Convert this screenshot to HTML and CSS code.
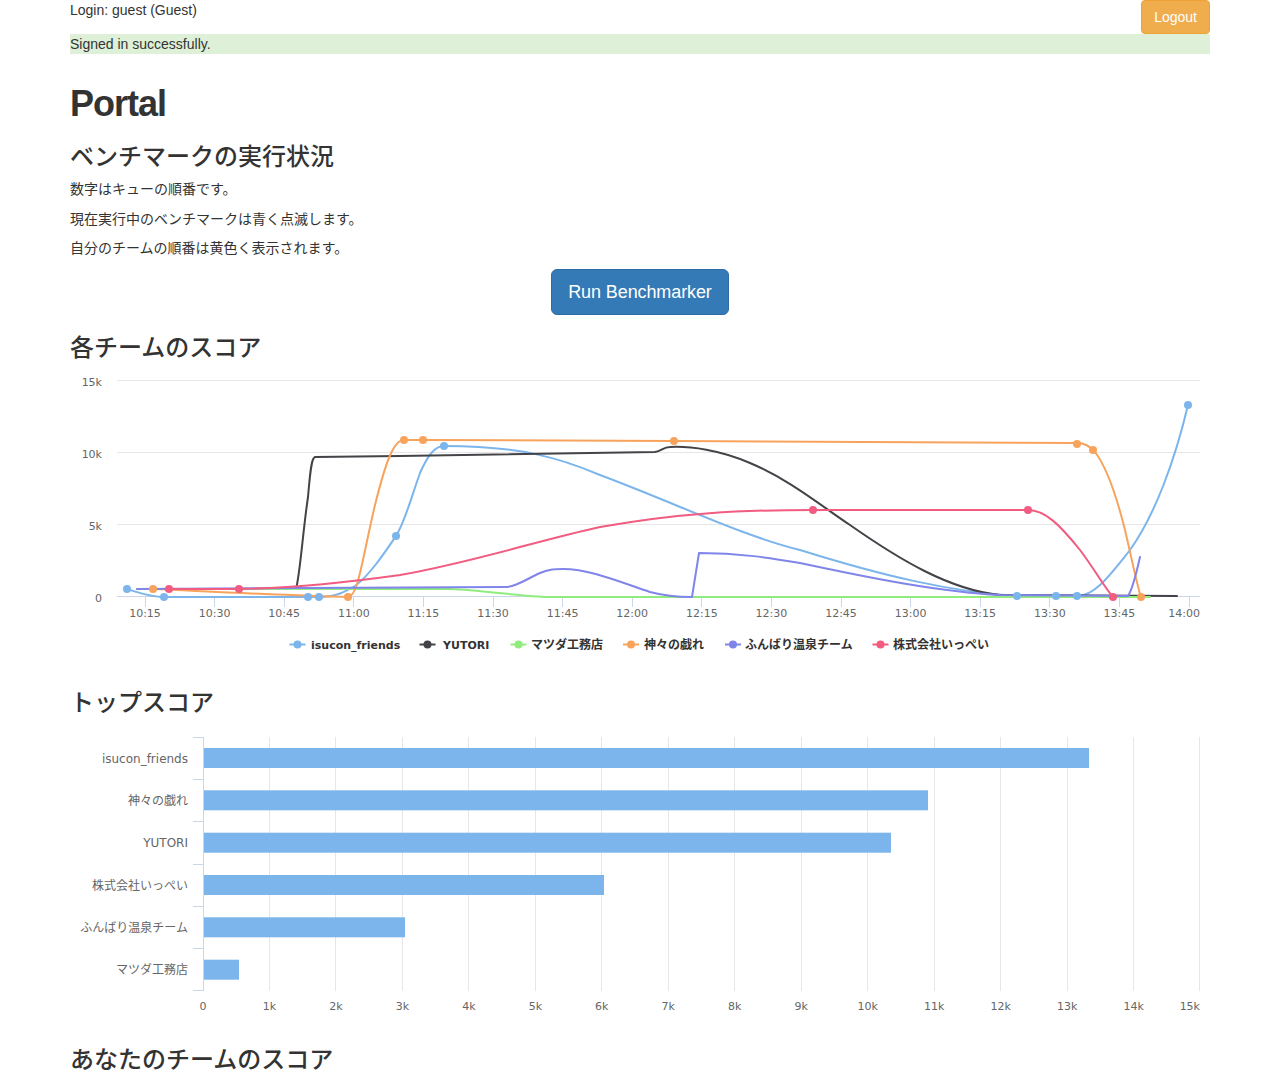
FILE: index.html
```html
<!DOCTYPE html>
<html lang="ja">
<head>
<meta charset="utf-8">
<title>Portal</title>
<link rel="stylesheet" href="styles.css">
</head>
<body>
<div class="container">
  <div class="topbar">
    <span class="login">Login: guest (Guest)</span>
    <button class="btn btn-warning">Logout</button>
  </div>
  <div class="flash">Signed in successfully.</div>

  <h1 class="page-title">Portal</h1>

  <h3 class="section section-first">ベンチマークの実行状況</h3>
  <p class="note">数字はキューの順番です。</p>
  <p class="note">現在実行中のベンチマークは青く点滅します。</p>
  <p class="note">自分のチームの順番は黄色く表示されます。</p>
  <div class="run-wrap"><button class="btn btn-primary btn-lg">Run Benchmarker</button></div>

  <h3 class="section">各チームのスコア</h3>
  <svg class="chart" width="1140" height="299" viewBox="70 371 1140 299">
    <path class="grid" d="M117 380.5H1200M117 452.5H1200M117 524.5H1200"/>
    <path class="axis" d="M117 596.5H1200"/>
    <path class="axis" d="M145.5 597V607M214.5 597V607M284.5 597V607M353.5 597V607M423.5 597V607M493.5 597V607M562.5 597V607M632.5 597V607M701.5 597V607M771.5 597V607M841.5 597V607M910.5 597V607M980.5 597V607M1049.5 597V607M1119.5 597V607M1189.5 597V607"/>

    <g class="axis-label" text-anchor="end">
      <text x="102" y="385.5">15k</text>
      <text x="102" y="457.5">10k</text>
      <text x="102" y="529.5">5k</text>
      <text x="102" y="601.5">0</text>
    </g>
    <g class="axis-label" text-anchor="middle">
      <text x="145" y="616.5">10:15</text>
      <text x="214.6" y="616.5">10:30</text>
      <text x="284.2" y="616.5">10:45</text>
      <text x="353.8" y="616.5">11:00</text>
      <text x="423.4" y="616.5">11:15</text>
      <text x="493" y="616.5">11:30</text>
      <text x="562.6" y="616.5">11:45</text>
      <text x="632.2" y="616.5">12:00</text>
      <text x="701.8" y="616.5">12:15</text>
      <text x="771.4" y="616.5">12:30</text>
      <text x="841" y="616.5">12:45</text>
      <text x="910.6" y="616.5">13:00</text>
      <text x="980.2" y="616.5">13:15</text>
      <text x="1049.8" y="616.5">13:30</text>
      <text x="1119.4" y="616.5">13:45</text>
      <text x="1200" y="616.5" text-anchor="end">14:00</text>
    </g>

    <g class="series">
      <path stroke="#7cb5ec" d="M127,589 C140,593 150,597 164,597 L319,597 C335,597 345,592 355,586 C370,575 385,552 396,536 C405,522 412,495 420,473 C428,455 435,446 444,446 C520,446 560,458 600,475 C680,505 740,535 800,550 C880,575 950,592 1017,596 L1077,596 C1095,596 1110,575 1130,550 C1155,515 1175,460 1188,405"/>
      <path stroke="#434348" d="M137,589 L296,589 C300,575 303,530 308,497 C310,475 311,458 315,457 L400,456 L655,452 C662,451 663,447 670,447 C690,446 720,450 750,463 C790,480 820,505 850,525 C900,560 950,590 1000,595 L1177,596"/>
      <path stroke="#90ed7d" d="M137,589 L450,589 C480,590 510,595 545,597 L1150,597"/>
      <path stroke="#f7a35c" d="M153,589 C220,592 300,596 348,597 C358,597 362,560 375,505 C385,465 393,440 404,440 L423,440 L674,441 L1077,443 C1085,443 1090,446 1095,452 C1105,465 1115,490 1125,530 C1132,560 1137,585 1141,597"/>
      <path stroke="#8085e9" d="M137,589 L505,587 C515,587 525,580 540,573 C550,569 555,569 563,569 C590,569 620,582 650,592 C665,596 675,597 692,597 L699,553 C740,553 770,558 800,563 C870,578 940,592 1000,595 L1128,596 C1132,590 1136,575 1140,557"/>
      <path stroke="#f15c80" d="M169,589 L239,589 C300,588 350,582 400,575 C470,563 540,540 600,527 C680,513 740,510 813,510 L1028,510 C1045,510 1060,525 1080,550 C1095,570 1105,588 1113,597"/>
    </g>

    <g fill="#7cb5ec">
      <circle cx="127" cy="589" r="4"/><circle cx="164" cy="597" r="4"/><circle cx="308" cy="597" r="4"/><circle cx="319" cy="597" r="4"/><circle cx="396" cy="536" r="4"/><circle cx="444" cy="446" r="4"/><circle cx="1017" cy="596" r="4"/><circle cx="1056" cy="596" r="4"/><circle cx="1077" cy="596" r="4"/><circle cx="1188" cy="405" r="4"/>
    </g>
    <g fill="#f7a35c">
      <circle cx="153" cy="589" r="4"/><circle cx="348" cy="597" r="4"/><circle cx="404" cy="440" r="4"/><circle cx="423" cy="440" r="4"/><circle cx="674" cy="441" r="4"/><circle cx="1077" cy="444" r="4"/><circle cx="1093" cy="450" r="4"/><circle cx="1141" cy="597" r="4"/>
    </g>
    <g fill="#f15c80">
      <circle cx="169" cy="589" r="4"/><circle cx="239" cy="589" r="4"/><circle cx="813" cy="510" r="4"/><circle cx="1028" cy="510" r="4"/><circle cx="1113" cy="597" r="4"/>
    </g>

    <g class="legend">
      <path stroke="#7cb5ec" d="M289.5 644.5H305.5"/><circle cx="297.5" cy="644.5" r="4" fill="#7cb5ec"/>
      <text class="lg-latin" x="311" y="648.5">isucon_friends</text>
      <path stroke="#434348" d="M419.5 644.5H435.5"/><circle cx="427.5" cy="644.5" r="4" fill="#434348"/>
      <text class="lg-latin" x="443" y="648.5">YUTORI</text>
      <path stroke="#90ed7d" d="M510.5 644.5H526.5"/><circle cx="518.5" cy="644.5" r="4" fill="#90ed7d"/>
      <text class="lg-cjk" x="531" y="649">マツダ工務店</text>
      <path stroke="#f7a35c" d="M623 644.5H639"/><circle cx="631" cy="644.5" r="4" fill="#f7a35c"/>
      <text class="lg-cjk" x="644" y="649">神々の戯れ</text>
      <path stroke="#8085e9" d="M725 644.5H741"/><circle cx="733" cy="644.5" r="4" fill="#8085e9"/>
      <text class="lg-cjk" x="745" y="649">ふんばり温泉チーム</text>
      <path stroke="#f15c80" d="M872.5 644.5H888.5"/><circle cx="880.5" cy="644.5" r="4" fill="#f15c80"/>
      <text class="lg-cjk" x="893" y="649">株式会社いっぺい</text>
    </g>
  </svg>

  <h3 class="section">トップスコア</h3>
  <svg class="chart" width="1140" height="300" viewBox="70 727 1140 300">
    <path class="grid" d="M269.5 737V991M335.5 737V991M402.5 737V991M468.5 737V991M535.5 737V991M601.5 737V991M668.5 737V991M734.5 737V991M801.5 737V991M867.5 737V991M934.5 737V991M1000.5 737V991M1067.5 737V991M1133.5 737V991M1199.5 737V991"/>
    <path class="axis" d="M203.5 737V991"/>
    <path class="axis" d="M193 737.5H203M193 779.5H203M193 821.5H203M193 864.5H203M193 906.5H203M193 948.5H203M193 990.5H203"/>

    <g fill="#7cb5ec">
      <rect x="204" y="748" width="885" height="20"/>
      <rect x="204" y="790.3" width="724" height="20"/>
      <rect x="204" y="832.7" width="687" height="20"/>
      <rect x="204" y="875" width="400" height="20"/>
      <rect x="204" y="917.3" width="201" height="20"/>
      <rect x="204" y="959.7" width="35" height="20"/>
    </g>

    <g class="cat-label" text-anchor="end">
      <text x="188" y="762.7">isucon_friends</text>
      <text x="188" y="805">神々の戯れ</text>
      <text x="188" y="847.3">YUTORI</text>
      <text x="188" y="889.7">株式会社いっぺい</text>
      <text x="188" y="932">ふんばり温泉チーム</text>
      <text x="188" y="974.3">マツダ工務店</text>
    </g>

    <g class="axis-label" text-anchor="middle">
      <text x="203" y="1010">0</text>
      <text x="269.5" y="1010">1k</text>
      <text x="335.9" y="1010">2k</text>
      <text x="402.4" y="1010">3k</text>
      <text x="468.9" y="1010">4k</text>
      <text x="535.4" y="1010">5k</text>
      <text x="601.8" y="1010">6k</text>
      <text x="668.3" y="1010">7k</text>
      <text x="734.8" y="1010">8k</text>
      <text x="801.2" y="1010">9k</text>
      <text x="867.7" y="1010">10k</text>
      <text x="934.2" y="1010">11k</text>
      <text x="1000.6" y="1010">12k</text>
      <text x="1067.1" y="1010">13k</text>
      <text x="1133.6" y="1010">14k</text>
      <text x="1200" y="1010" text-anchor="end">15k</text>
    </g>
  </svg>

  <h3 class="section">あなたのチームのスコア</h3>
</div>
</body>
</html>
```

FILE: styles.css
```css
html, body {
  margin: 0;
  padding: 0;
  background: #fff;
}

body {
  font-family: "Liberation Sans", "Noto Sans CJK JP", sans-serif;
  font-size: 14px;
  line-height: 20px;
  color: #333;
}

.container {
  width: 1140px;
  margin: 0 auto;
}

.topbar {
  display: flex;
  justify-content: space-between;
  align-items: flex-start;
  height: 34px;
}

.login {
  line-height: 20px;
}

.btn {
  font-family: inherit;
  display: inline-block;
  box-sizing: border-box;
  border: 1px solid transparent;
  border-radius: 4px;
  padding: 6px 12px;
  font-size: 14px;
  line-height: 20px;
  color: #fff;
  cursor: pointer;
}

.btn-warning {
  background: #f0ad4e;
  border-color: #eea236;
  height: 34px;
}

.btn-primary {
  background: #337ab7;
  border-color: #2e6da4;
}

.btn-lg {
  padding: 10px 16px;
  font-size: 18px;
  line-height: 24px;
  border-radius: 6px;
  width: 178px;
  letter-spacing: -0.1px;
}

.flash {
  background: #dff0d8;
  height: 20px;
  line-height: 20px;
  color: #333;
}

.page-title {
  font-size: 36px;
  font-weight: 700;
  line-height: 39.6px;
  letter-spacing: -1px;
  margin: 30px 0 10px;
  color: #333;
}

.section {
  font-size: 24px;
  font-weight: 500;
  line-height: 26.4px;
  margin: 20px 0 10px;
  color: #333;
}

.section-first {
  margin-bottom: 9px;
}

.note {
  margin: 0 0 9.5px;
}

.run-wrap {
  display: flex;
  justify-content: center;
  margin-top: 11px;
}

.chart {
  display: block;
}

.grid {
  fill: none;
  stroke: #e6e6e6;
  stroke-width: 1;
}

.axis {
  fill: none;
  stroke: #ccd6eb;
  stroke-width: 1;
}

.axis-label {
  font-family: "DejaVu Sans", "Noto Sans CJK JP", sans-serif;
  font-size: 11px;
  fill: #666;
}

.cat-label {
  font-family: "DejaVu Sans", "Noto Sans CJK JP", sans-serif;
  font-size: 12px;
  fill: #666;
}

.series path {
  fill: none;
  stroke-width: 2;
  stroke-linejoin: round;
  stroke-linecap: round;
}

.legend path {
  fill: none;
  stroke-width: 2;
}

.lg-latin {
  font-family: "DejaVu Sans", "Noto Sans CJK JP", sans-serif;
  font-size: 11px;
  font-weight: 700;
  fill: #333;
}

.lg-cjk {
  font-family: "Noto Sans CJK JP", sans-serif;
  font-size: 12px;
  font-weight: 700;
  fill: #333;
}
```
